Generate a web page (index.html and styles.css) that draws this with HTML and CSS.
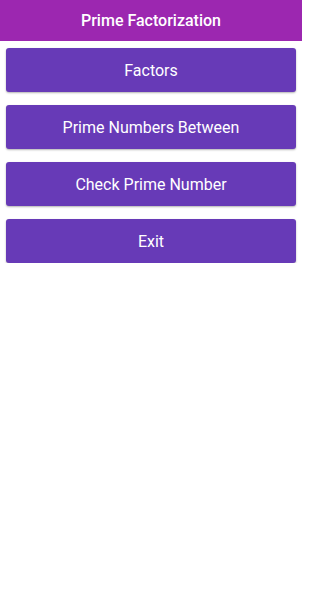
FILE: index.html
```html
<!DOCTYPE html>
<html>
<head>
<meta charset="utf-8">
<meta name="viewport" content="width=device-width, initial-scale=1">
<link rel="stylesheet" href="styles.css">
</head>
<body>
<div class="screen">
<header class="appbar">Prime Factorization</header>
<main class="menu">
  <button class="btn">Factors</button>
  <button class="btn">Prime Numbers Between</button>
  <button class="btn">Check Prime Number</button>
  <button class="btn">Exit</button>
</main>
</div>
</body>
</html>
```

FILE: styles.css
```css
html, body {
  margin: 0;
  padding: 0;
  background: #ffffff;
  font-family: Roboto, "Noto Sans", sans-serif;
}
.screen {
  width: 302px;
}
.appbar {
  height: 41px;
  background: #9c27b0;
  color: #ffffff;
  font-size: 16px;
  font-weight: 500;
  display: flex;
  align-items: center;
  justify-content: center;
}
.menu {
  display: flex;
  flex-direction: column;
  gap: 13px;
  padding: 7px 6px 0;
}
.btn {
  height: 44px;
  border: none;
  border-radius: 3px;
  background: #673ab7;
  color: #ffffff;
  font-family: Roboto, "Noto Sans", sans-serif;
  font-size: 16px;
  box-shadow: 0 1px 2px rgba(0,0,0,0.3);
  padding: 0;
}
```
